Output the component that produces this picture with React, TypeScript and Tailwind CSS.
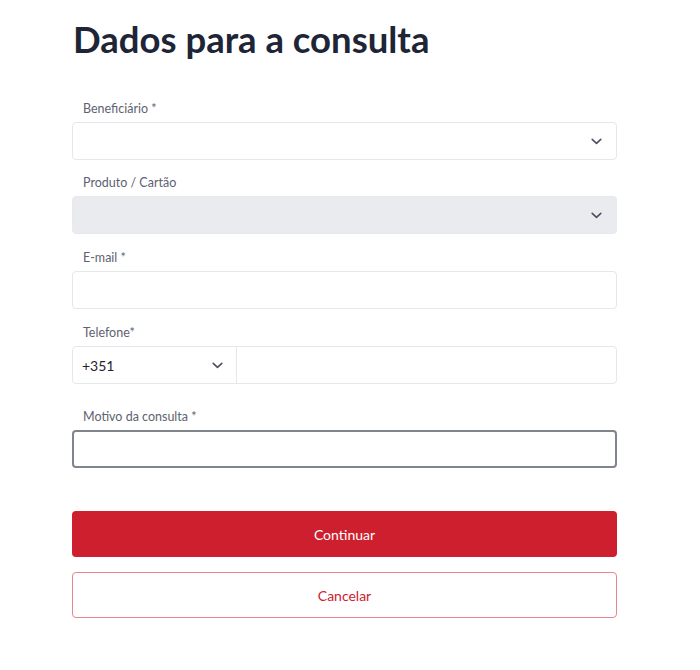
import React from "react";

function Chevron({ className = "" }: { className?: string }) {
  return (
    <svg width="11" height="7" viewBox="0 0 11 7" className={className} fill="none">
      <path d="M1.2 1.4 L5.5 5.4 L9.8 1.4" stroke="#4b5060" strokeWidth="1.6" strokeLinecap="round" strokeLinejoin="round" />
    </svg>
  );
}

function Label({ children }: { children: React.ReactNode }) {
  return <div className="h-4 leading-4 text-[12.5px] text-[#5d6270] mb-[5px] pl-[11px]">{children}</div>;
}

export default function App() {
  return (
    <div className="min-h-[670px] w-[700px] bg-white" style={{ fontFamily: "Lato, 'Open Sans', sans-serif" }}>
      <div className="ml-[72px] w-[545px] pt-[17px]">
        <h1 className="text-[36.5px] leading-[44px] font-bold text-[#1e2537] pl-[1px]">Dados para a consulta</h1>

        <div className="mt-[40px]">
          <Label>Beneficiário *</Label>
          <div className="h-[38px] rounded-[4px] border border-[#e6e7ea] bg-white flex items-center justify-end pr-[14px]">
            <Chevron />
          </div>
        </div>

        <div className="mt-[15px]">
          <Label>Produto / Cartão</Label>
          <div className="h-[38px] rounded-[4px] border border-[#e7e9ec] bg-[#e9ebee] flex items-center justify-end pr-[14px]">
            <Chevron />
          </div>
        </div>

        <div className="mt-[16px]">
          <Label>E-mail *</Label>
          <div className="h-[38px] rounded-[4px] border border-[#e6e7ea] bg-white" />
        </div>

        <div className="mt-[16px]">
          <Label>Telefone*</Label>
          <div className="h-[38px] rounded-[4px] border border-[#e6e7ea] bg-white flex">
            <div className="w-[164px] border-r border-[#e6e7ea] flex items-center justify-between pl-[9px] pr-[13px]">
              <span className="text-[14px] text-[#1f2430]">+351</span>
              <Chevron />
            </div>
            <div className="flex-1" />
          </div>
        </div>

        <div className="mt-[25px]">
          <Label>Motivo da consulta *</Label>
          <div className="h-[38px] rounded-[4px] border-2 border-[#80848d] bg-white" />
        </div>

        <button className="mt-[43px] w-full h-[46px] rounded-[4px] bg-[#cd1f2e] text-white text-[14px] flex items-center justify-center">
          Continuar
        </button>
        <button className="mt-[15px] w-full h-[46px] rounded-[4px] border border-[#e8868c] bg-white text-[#cd2131] text-[14px] flex items-center justify-center">
          Cancelar
        </button>
      </div>
    </div>
  );
}
